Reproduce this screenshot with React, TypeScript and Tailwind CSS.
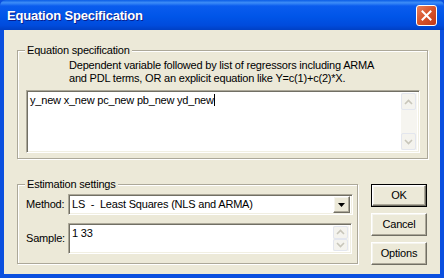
import React from 'react'

const font = "font-['Liberation_Sans',Arial,sans-serif]"

const ScrollArrow: React.FC<{ up?: boolean }> = ({ up }) => (
    <div className="w-[15px] h-[17px] rounded-[2px] border border-[#E3E6EE] bg-[#F4F3EE] flex items-center justify-center">
        <svg width="9" height="6" viewBox="0 0 9 6">
            <path d={up ? 'M1 5 L4.5 1.5 L8 5' : 'M1 1 L4.5 4.5 L8 1'} stroke="#C8C6BA" strokeWidth="1.6" fill="none" />
        </svg>
    </div>
)

const ScrollBar: React.FC = () => (
    <div className="w-[16px] h-full flex flex-col justify-between bg-[#F6F5F0]">
        <ScrollArrow up />
        <ScrollArrow />
    </div>
)

const sunken =
    'border border-t-[#ACA899] border-l-[#ACA899] border-b-white border-r-white shadow-[inset_1px_1px_0_#716F64,inset_-1px_-1px_0_#F1EFE2] bg-white'

const raised =
    'border border-t-white border-l-white border-b-[#716F64] border-r-[#716F64] shadow-[inset_-1px_-1px_0_#ACA899,inset_1px_1px_0_#F5F4EE] bg-[#ECE9D8]'

const Group: React.FC<{ label: string; className: string; children: React.ReactNode }> = ({ label, className, children }) => (
    <div className={`relative border border-[#ACA899] shadow-[inset_1px_1px_0_#fff,1px_1px_0_#fff] ${className}`}>
        <span className="absolute left-[7px] -top-[7px] px-[2px] bg-[#ECE9D8] text-[11px] leading-[13px] tracking-[-0.2px] text-black">
            {label}
        </span>
        {children}
    </div>
)

const Button: React.FC<{ label: string; isDefault?: boolean }> = ({ label, isDefault }) => (
    <div className={isDefault ? 'border border-black' : ''}>
        <div
            className={`${raised} ${isDefault ? 'h-[21px]' : 'h-[23px]'} flex items-center justify-center text-[11px] tracking-[-0.2px] text-black`}
        >
            {label}
        </div>
    </div>
)

const App: React.FC = () => {
    return (
        <div className={`w-[444px] h-[278px] flex flex-col overflow-hidden bg-[#0A4FDF] ${font}`}>
            <div className="h-[30px] shrink-0 flex items-center justify-between pl-[7px] pr-[7px] rounded-t-[6px] bg-[linear-gradient(to_bottom,#0A5DE6_0%,#3D8DF7_9%,#0A5CEE_20%,#0055E8_55%,#004BDC_85%,#0040C4_100%)]">
                <span className="text-white font-bold text-[13px] tracking-[-0.2px] [text-shadow:1px_1px_0_#0A1E8C] pt-[1px]">
                    Equation Specification
                </span>
                <div className="w-[21px] h-[21px] rounded-[3px] border border-white bg-[linear-gradient(to_bottom_right,#E8805C,#D7532A_50%,#C2391A)] flex items-center justify-center">
                    <svg width="11" height="11" viewBox="0 0 11 11">
                        <path d="M1.5 1.5 L9.5 9.5 M9.5 1.5 L1.5 9.5" stroke="#fff" strokeWidth="2" strokeLinecap="square" />
                    </svg>
                </div>
            </div>
            <div className="flex-1 mx-[4px] mb-[4px] bg-[#ECE9D8] pl-[13px] pt-[20px] text-black tracking-[-0.2px]">
                <Group label="Equation specification" className="w-[411px] h-[109px] px-[8px] pt-[8px]">
                    <p className="ml-[43px] text-[11px] leading-[13px]">
                        Dependent variable followed by list of regressors including ARMA
                        <br />
                        and PDL terms, OR an explicit equation like Y=c(1)+c(2)*X.
                    </p>
                    <div className={`${sunken} mt-[5px] w-[394px] h-[63px] flex p-[2px]`}>
                        <div className="flex-1 text-[11px] leading-[13px] pl-[1px] pt-[1px]">
                            y_new x_new pc_new pb_new yd_new<span className="inline-block w-px h-[12px] bg-black align-[-2px]" />
                        </div>
                        <ScrollBar />
                    </div>
                </Group>
                <div className="flex mt-[25px]">
                    <Group label="Estimation settings" className="w-[341px] h-[80px] pl-[8px] pt-[9px]">
                        <div className="flex items-center">
                            <span className="w-[42px] text-[11px]">Method:</span>
                            <div className={`${sunken} w-[285px] h-[21px] flex items-center p-[2px]`}>
                                <span className="flex-1 pl-[1px] text-[11px] whitespace-pre">LS  -  Least Squares (NLS and ARMA)</span>
                                <div className={`${raised} w-[17px] h-[17px] flex items-center justify-center`}>
                                    <svg width="7" height="4" viewBox="0 0 7 4">
                                        <path d="M0 0 H7 L3.5 4 Z" fill="#000" />
                                    </svg>
                                </div>
                            </div>
                        </div>
                        <div className="flex items-center mt-[8px]">
                            <span className="w-[42px] text-[11px]">Sample:</span>
                            <div className={`${sunken} w-[284px] h-[31px] flex p-[2px]`}>
                                <div className="flex-1 text-[11px] leading-[13px] pl-[1px] pt-[1px]">1 33</div>
                                <ScrollBar />
                            </div>
                        </div>
                    </Group>
                    <div className="ml-[13px] w-[56px] flex flex-col gap-[6px]">
                        <Button label="OK" isDefault />
                        <Button label="Cancel" />
                        <Button label="Options" />
                    </div>
                </div>
            </div>
        </div>
    )
}

export default App
